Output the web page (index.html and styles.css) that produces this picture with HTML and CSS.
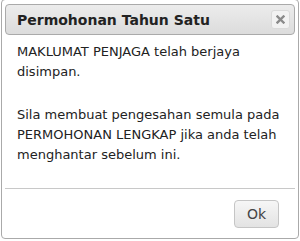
FILE: index.html
```html
<!DOCTYPE html>
<html>
<head>
<meta charset="utf-8">
<link rel="stylesheet" href="styles.css">
</head>
<body>
<div class="dialog">
  <div class="titlebar">
    <span class="title">Permohonan Tahun Satu</span>
    <button class="close" aria-label="close">
      <svg width="9" height="9" viewBox="0 0 9 9"><path d="M1.5 1.5 L7.5 7.5 M7.5 1.5 L1.5 7.5" stroke="#8a8a8a" stroke-width="2.4" stroke-linecap="square"/></svg>
    </button>
  </div>
  <div class="content">
    <p>MAKLUMAT PENJAGA telah berjaya disimpan.</p>
    <p>Sila membuat pengesahan semula pada PERMOHONAN LENGKAP jika anda telah menghantar sebelum ini.</p>
  </div>
  <div class="buttonpane">
    <button class="btn">Ok</button>
  </div>
</div>
</body>
</html>
```
FILE: styles.css
```css
html, body { margin: 0; padding: 0; background: #fff; }
body { font-family: "DejaVu Sans", Verdana, sans-serif; font-size: 13px; color: #222; }
.dialog {
  box-sizing: border-box;
  width: 298px;
  height: 240px;
  margin: -1px 0 0 1px;
  border: 1px solid #aaa;
  border-radius: 4px;
  padding: 3px;
  background: #fff;
  display: flex;
  flex-direction: column;
}
.titlebar {
  box-sizing: border-box;
  height: 34px;
  margin-top: 1px;
  border: 1px solid #aaa;
  border-radius: 4px;
  background: linear-gradient(#ececec, #dcdcdc);
  display: flex;
  align-items: center;
  justify-content: space-between;
  padding: 0 4px 0 11px;
}
.title { font-weight: bold; font-size: 14px; color: #222; }
.close {
  width: 19px; height: 19px;
  padding: 0; margin: 0;
  border: 1px solid #dadada;
  border-radius: 3px;
  background: #f2f2f2;
  display: flex; align-items: center; justify-content: center;
}
.content { padding: 7px 12px 0 12px; flex: 1; line-height: 20px; }
.content p { margin: 0 0 23px 0; }
.buttonpane {
  border-top: 1px solid #c8c8c8;
  height: 50px;
  display: flex;
  justify-content: flex-end;
  align-items: flex-start;
  padding: 11px 16px 0 0;
  box-sizing: border-box;
}
.btn {
  box-sizing: border-box;
  width: 45px; height: 28px;
  border: 1px solid #c5c5c5;
  border-radius: 4px;
  background: linear-gradient(#f6f6f6, #e3e3e3);
  font-family: "DejaVu Sans", Verdana, sans-serif;
  font-size: 14px;
  color: #444;
  padding: 0;
}
```
